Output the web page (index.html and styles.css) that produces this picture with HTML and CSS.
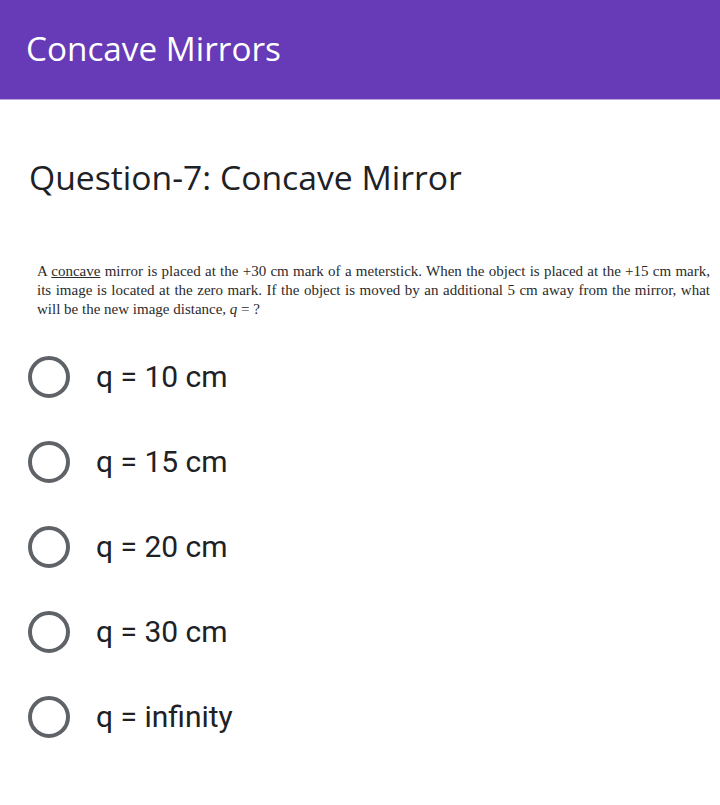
FILE: index.html
```html
<!DOCTYPE html>
<html lang="en">

<head>
    <meta charset="UTF-8">
    <title>Concave Mirrors</title>
    <link rel="stylesheet" href="styles.css">
</head>

<body>
    <header class="topbar">
        <div class="topbar-title">Concave Mirrors</div>
    </header>

    <section class="question">
        <h2 class="question-title">Question-7: Concave Mirror</h2>
        <p class="question-text">
            A <u>concave</u> mirror is placed at the +30 cm mark of a meterstick. When the object is placed at the +15 cm mark,
            its image is located at the zero mark. If the object is moved by an additional 5 cm away from the mirror, what
            will be the new image distance, <i>q</i> = ?
        </p>

        <div class="options">
            <label class="option"><span class="radio"></span><span class="option-text">q = 10 cm</span></label>
            <label class="option"><span class="radio"></span><span class="option-text">q = 15 cm</span></label>
            <label class="option"><span class="radio"></span><span class="option-text">q = 20 cm</span></label>
            <label class="option"><span class="radio"></span><span class="option-text">q = 30 cm</span></label>
            <label class="option"><span class="radio"></span><span class="option-text">q = infinity</span></label>
        </div>
    </section>
</body>

</html>
```

FILE: styles.css
```css
body {
    margin: 0;
    background-color: #ffffff;
    font-family: Roboto, "Liberation Sans", sans-serif;
}

.topbar {
    height: 100px;
    background-color: #673ab7;
    border-bottom: 1px solid #b9a5dc;
    box-sizing: border-box;
}

.topbar-title {
    color: #ffffff;
    font-family: "Open Sans", sans-serif;
    font-size: 33.3px;
    padding: 28px 0 0 26px;
    line-height: 40px;
}

.question {
    padding: 0 10px 0 28px;
}

.question-title {
    margin: 0;
    padding-top: 55px;
    padding-left: 1px;
    font-family: "Open Sans", sans-serif;
    font-weight: normal;
    font-size: 33.7px;
    line-height: 44px;
    color: #202124;
}

.question-text {
    margin: 63px 0 0 9px;
    font-family: "Liberation Serif", serif;
    font-size: 15px;
    line-height: 19px;
    color: #2b2b2b;
    text-align: justify;
}

.options {
    margin-top: 15px;
}

.option {
    display: flex;
    align-items: center;
    height: 85px;
}

.radio {
    width: 34px;
    height: 34px;
    border: 4px solid #5f6368;
    border-radius: 50%;
    flex-shrink: 0;
}

.option-text {
    margin-left: 26px;
    font-size: 30px;
    color: #202124;
}
```
